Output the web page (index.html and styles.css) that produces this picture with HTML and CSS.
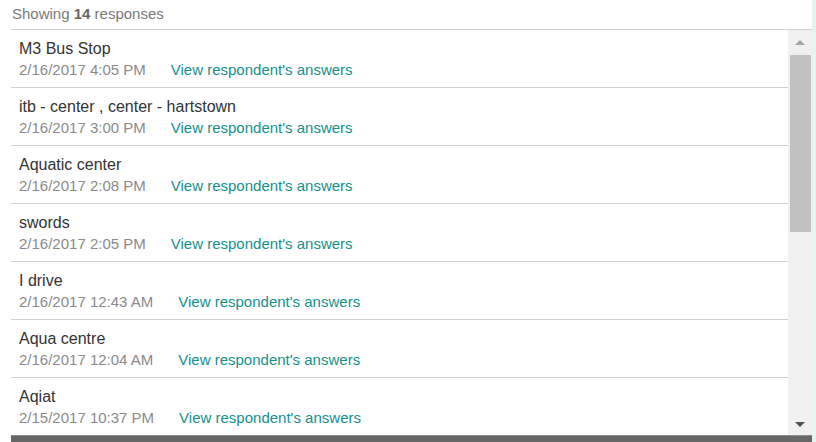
FILE: index.html
```html
<!DOCTYPE html>
<html>
<head>
<meta charset="utf-8">
<link rel="stylesheet" href="styles.css">
</head>
<body>
<div class="page">
  <div class="panel">
    <div class="header">Showing <b>14</b> responses</div>
    <div class="body">
      <div class="list">
        <div class="row"><div class="title">M3 Bus Stop</div><div class="meta"><span class="date">2/16/2017 4:05 PM</span><a class="link">View respondent's answers</a></div></div>
        <div class="row"><div class="title">itb - center , center - hartstown</div><div class="meta"><span class="date">2/16/2017 3:00 PM</span><a class="link">View respondent's answers</a></div></div>
        <div class="row"><div class="title">Aquatic center</div><div class="meta"><span class="date">2/16/2017 2:08 PM</span><a class="link">View respondent's answers</a></div></div>
        <div class="row"><div class="title">swords</div><div class="meta"><span class="date">2/16/2017 2:05 PM</span><a class="link">View respondent's answers</a></div></div>
        <div class="row"><div class="title">I drive</div><div class="meta"><span class="date">2/16/2017 12:43 AM</span><a class="link">View respondent's answers</a></div></div>
        <div class="row"><div class="title">Aqua centre</div><div class="meta"><span class="date">2/16/2017 12:04 AM</span><a class="link">View respondent's answers</a></div></div>
        <div class="row"><div class="title">Aqiat</div><div class="meta"><span class="date">2/15/2017 10:37 PM</span><a class="link">View respondent's answers</a></div></div>
      </div>
      <div class="scrollbar">
        <div class="arrow up"></div>
        <div class="track"><div class="thumb"></div></div>
        <div class="arrow down"></div>
      </div>
    </div>
    <div class="footer"></div>
  </div>
  <div class="edge"></div>
</div>
</body>
</html>
```
FILE: styles.css
```css
html, body {
  margin: 0;
  padding: 0;
  background: #fff;
}
body {
  font-family: "Liberation Sans", Arial, sans-serif;
  width: 816px;
  height: 442px;
  overflow: hidden;
}
.page {
  display: flex;
  height: 442px;
  padding-left: 11px;
}
.panel {
  width: 801px;
  display: flex;
  flex-direction: column;
}
.edge {
  width: 4px;
  background: #e6f3f3;
}
.header {
  height: 30px;
  flex: none;
  box-sizing: border-box;
  padding: 5px 0 0 1px;
  font-size: 15px;
  line-height: 18px;
  color: #7a7a7a;
  border-bottom: 1px solid #cfcfcf;
}
.header b {
  color: #666;
}
.body {
  display: flex;
  height: 405px;
  flex: none;
  overflow: hidden;
}
.list {
  flex: 1;
  overflow: hidden;
}
.row {
  padding: 9px 0 7px 8px;
  border-bottom: 1px solid #d0d0d0;
}
.title {
  font-size: 16px;
  line-height: 20px;
  color: #333;
}
.meta {
  margin-top: 1px;
  font-size: 15px;
  line-height: 20px;
  display: flex;
}
.date {
  color: #8a8a8a;
}
.link {
  color: #16908c;
  margin-left: 25px;
}
.scrollbar {
  width: 24px;
  background: #f0f0f0;
  display: flex;
  flex-direction: column;
  align-items: center;
}
.arrow {
  height: 25px;
  width: 100%;
  display: flex;
  align-items: center;
  justify-content: center;
}
.arrow.up::before {
  content: "";
  border-left: 5px solid transparent;
  border-right: 5px solid transparent;
  border-bottom: 5px solid #a3a3a3;
}
.arrow.down::before {
  content: "";
  border-left: 5px solid transparent;
  border-right: 5px solid transparent;
  border-top: 5px solid #505050;
  margin-top: 3px;
}
.track {
  flex: 1;
  width: 100%;
  display: flex;
  justify-content: center;
}
.thumb {
  width: 21px;
  height: 177px;
  background: #c1c1c1;
}
.footer {
  height: 7px;
  flex: none;
  background: #666;
  border-top: 1px solid #8a8a8a;
  box-sizing: border-box;
}
```
